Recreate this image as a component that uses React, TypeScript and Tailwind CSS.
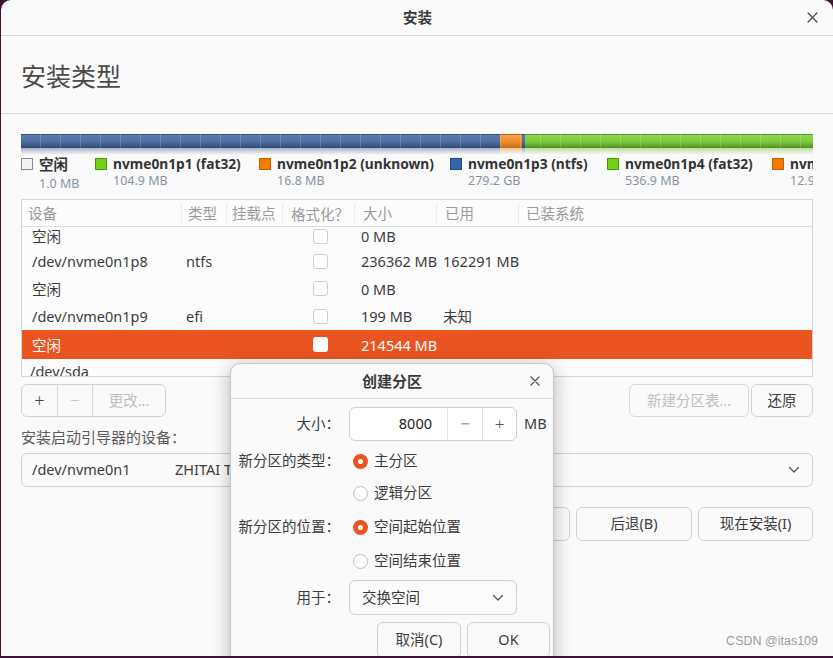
import React from "react";

const FONT = "font-['Noto_Sans','Noto_Sans_CJK_SC',sans-serif]";

function Chevron({ className = "" }: { className?: string }) {
  return (
    <svg width="12" height="8" viewBox="0 0 12 8" className={className} fill="none">
      <path d="M1.5 1.5 L6 6 L10.5 1.5" stroke="#555" strokeWidth="1.3" strokeLinecap="round" strokeLinejoin="round" />
    </svg>
  );
}

function CloseX({ size = 11 }: { size?: number }) {
  return (
    <svg width={size} height={size} viewBox="0 0 10 10" fill="none">
      <path d="M1 1 L9 9 M9 1 L1 9" stroke="#555" strokeWidth="1.3" strokeLinecap="round" />
    </svg>
  );
}

function Radio({ checked }: { checked: boolean }) {
  return checked ? (
    <div className="w-[15px] h-[15px] rounded-full bg-[#e95420] flex items-center justify-center shrink-0">
      <div className="w-[5px] h-[5px] rounded-full bg-white" />
    </div>
  ) : (
    <div className="w-[15px] h-[15px] rounded-full border border-[#bcbcbc] bg-white shrink-0" />
  );
}

function Check({ selected }: { selected?: boolean }) {
  return (
    <div
      className={
        selected
          ? "w-[15px] h-[15px] rounded-[3px] bg-white"
          : "w-[15px] h-[15px] rounded-[3px] border border-[#cfcfcf] bg-white"
      }
    />
  );
}

type Row = { dev: string; type: string; size: string; used: string; sel?: boolean; h: string };

const rows: Row[] = [
  { dev: "空闲", type: "", size: "0 MB", used: "", h: "h-[22px]" },
  { dev: "/dev/nvme0n1p8", type: "ntfs", size: "236362 MB", used: "162291 MB", h: "h-[28px]" },
  { dev: "空闲", type: "", size: "0 MB", used: "", h: "h-[27px]" },
  { dev: "/dev/nvme0n1p9", type: "efi", size: "199 MB", used: "未知", h: "h-[28px]" },
  { dev: "空闲", type: "", size: "214544 MB", used: "", sel: true, h: "h-[29px]" },
];

const cols = "grid grid-cols-[160px_45px_56px_72px_82px_82px_1fr]";

export default function App() {
  return (
    <div className={`w-[833px] h-[658px] bg-[#3d1433] overflow-hidden ${FONT}`}>
      <div className="ml-[1px] w-[832px] h-[656px] rounded-t-[10px] bg-[#fafafa] relative overflow-hidden flex flex-col">
        {/* title bar */}
        <div className="h-[36px] shrink-0 border-b border-[#d8d8d8] grid grid-cols-[1fr_auto_1fr] items-center">
          <div />
          <div className="text-[14.5px] font-semibold text-[#3a3a3a] pl-[1px]">安装</div>
          <div className="justify-self-end pr-[15px] flex items-center">
            <CloseX size={11} />
          </div>
        </div>
        {/* header */}
        <div className="h-[78px] shrink-0 border-b border-[#dadada] flex items-center pl-[20px] pt-[3px]">
          <div className="text-[25px] text-[#4a4a4a] leading-none">安装类型</div>
        </div>

        <div className="px-[20px] flex flex-col">
          {/* partition bar */}
          <div className="mt-[20px] relative">
            <div className="flex h-[14px]">
              <div className="w-[479px] bg-[linear-gradient(#34517c_0,#34517c_1px,#5a7bae_1px,#4c6ea2_55%,#2e4a72_100%)]" />
              <div className="w-[22px] bg-[linear-gradient(#b86010_0,#b86010_1px,#f6a04a_1px,#ef8a2c_55%,#c46a18_100%)]" />
              <div className="w-[3px] bg-[linear-gradient(#34517c_0,#34517c_1px,#5a7bae_1px,#4c6ea2_55%,#2e4a72_100%)]" />
              <div className="flex-1 bg-[linear-gradient(#5d9a2c_0,#5d9a2c_1px,#8bd64e_1px,#7ccb3f_55%,#4f8c1f_100%)]" />
            </div>
            <div className="absolute left-0 right-0 top-0 h-[14px] bg-[repeating-linear-gradient(90deg,transparent_0,transparent_19px,rgba(255,255,255,0.18)_19px,rgba(255,255,255,0.18)_20px)]" />
            <div className="flex h-[7px]">
              <div className="w-[479px] bg-[linear-gradient(rgba(60,90,135,0.45),rgba(60,90,135,0))]" />
              <div className="w-[22px] bg-[linear-gradient(rgba(230,130,40,0.45),rgba(230,130,40,0))]" />
              <div className="w-[3px] bg-[linear-gradient(rgba(60,90,135,0.45),rgba(60,90,135,0))]" />
              <div className="flex-1 bg-[linear-gradient(rgba(110,190,50,0.45),rgba(110,190,50,0))]" />
            </div>
          </div>

          {/* legend */}
          <div className="flex h-[37px] overflow-hidden">
            <div className="w-[74px] shrink-0 flex items-start">
              <div className="mt-[3px] w-[12px] h-[12px] border border-[#8a8a8a] bg-[#f2f2f2] shrink-0" />
              <div className="ml-[6px] flex flex-col">
                <div className="text-[14.5px] font-bold leading-[20px] text-[#333] mt-[-1px]">空闲</div>
                <div className="text-[12.5px] leading-[16px] text-[#8893a0] mt-[2px]">1.0 MB</div>
              </div>
            </div>
            {[
              { c: "bg-[#73d216] border-[#4e9a06]", n: "nvme0n1p1 (fat32)", s: "104.9 MB", w: "w-[164px]" },
              { c: "bg-[#f57900] border-[#ce5c00]", n: "nvme0n1p2 (unknown)", s: "16.8 MB", w: "w-[191px]" },
              { c: "bg-[#3465a4] border-[#204a87]", n: "nvme0n1p3 (ntfs)", s: "279.2 GB", w: "w-[157px]" },
              { c: "bg-[#73d216] border-[#4e9a06]", n: "nvme0n1p4 (fat32)", s: "536.9 MB", w: "w-[165px]" },
              { c: "bg-[#f57900] border-[#ce5c00]", n: "nvme0n1p5 (ntfs)", s: "12.9 GB", w: "w-[160px]" },
            ].map((l, i) => (
              <div key={i} className={`${l.w} shrink-0 flex items-start`}>
                <div className={`mt-[3px] w-[12px] h-[12px] border ${l.c} shrink-0`} />
                <div className="ml-[6px] flex flex-col whitespace-nowrap">
                  <div className="text-[13.75px] font-bold leading-[18px] text-[#333]">{l.n}</div>
                  <div className="text-[12.5px] leading-[16px] text-[#8893a0]">{l.s}</div>
                </div>
              </div>
            ))}
          </div>

          {/* table */}
          <div className="mt-[7px] h-[178px] border border-[#d5d5d5] bg-[#fcfcfc] flex flex-col overflow-hidden">
            <div className={`${cols} h-[27px] shrink-0 border-b border-[#dedede] text-[14.5px] text-[#9a9a9a] items-center`}>
              <div className="pl-[6px] h-[21px] border-r border-[#ececec] leading-[21px]">设备</div>
              <div className="pl-[6px] h-[21px] border-r border-[#ececec] leading-[21px]">类型</div>
              <div className="pl-[5px] h-[21px] border-r border-[#ececec] leading-[21px]">挂载点</div>
              <div className="pl-[8px] h-[21px] border-r border-[#ececec] leading-[21px]">
                格式化<span className="font-['Noto_Sans_CJK_SC',sans-serif]">？</span>
              </div>
              <div className="pl-[8px] h-[21px] border-r border-[#ececec] leading-[21px]">大小</div>
              <div className="pl-[8px] h-[21px] border-r border-[#ececec] leading-[21px]">已用</div>
              <div className="pl-[7px] h-[21px] leading-[21px]">已装系统</div>
            </div>
            <div className="h-[149px] overflow-hidden">
              <div className="-mt-[2px] flex flex-col">
                {rows.map((r, i) => (
                  <div
                    key={i}
                    className={`${cols} ${r.h} items-center text-[14.5px] leading-[20px] ${
                      r.sel ? "bg-[#e95420] text-white" : "text-[#3c3c3c]"
                    }`}
                  >
                    <div className="pl-[10px] whitespace-nowrap">{r.dev}</div>
                    <div className="pl-[4px]">{r.type}</div>
                    <div />
                    <div className="flex justify-center pl-[2px]">
                      <Check selected={r.sel} />
                    </div>
                    <div className="pl-[6px] whitespace-nowrap">{r.size}</div>
                    <div className="pl-[6px] whitespace-nowrap">{r.used}</div>
                    <div />
                  </div>
                ))}
                <div className="h-[26px] flex items-center pl-[8px] text-[14.5px] text-[#3c3c3c]">/dev/sda</div>
              </div>
            </div>
          </div>

          {/* buttons under table */}
          <div className="mt-[7px] flex items-center justify-between h-[33px]">
            <div className="flex h-[33px] border border-[#d3d3d3] rounded-[6px] bg-[#fafafa] text-[14.5px]">
              <div className="w-[35px] flex items-center justify-center text-[#444] text-[18px] font-light">+</div>
              <div className="w-[35px] border-l border-[#d8d8d8] flex items-center justify-center text-[#c0c0c0] text-[18px] font-light">−</div>
              <div className="w-[73px] border-l border-[#d8d8d8] flex items-center justify-center text-[#bdbdbd]">更改...</div>
            </div>
            <div className="flex gap-[2px]">
              <div className="w-[120px] h-[33px] border border-[#d8d8d8] rounded-[6px] flex items-center justify-center text-[14.5px] text-[#c0c0c0]">新建分区表...</div>
              <div className="w-[62px] h-[33px] border border-[#d3d3d3] rounded-[6px] flex items-center justify-center text-[14.5px] text-[#3c3c3c]">还原</div>
            </div>
          </div>

          <div className="mt-[10px] text-[15px] leading-[20px] text-[#5c5c5c]">安装启动引导器的设备：</div>

          <div className="mt-[6px] h-[34px] border border-[#d3d3d3] rounded-[6px] flex items-center text-[14.5px] text-[#3c3c3c]">
            <div className="pl-[10px] w-[153px]">/dev/nvme0n1</div>
            <div className="flex-1">ZHITAI TiPlus5000 1TB (1.0 TB)</div>
            <div className="pr-[12px]">
              <Chevron />
            </div>
          </div>

          <div className="mt-[20px] flex justify-end gap-[6px] text-[14.5px] text-[#3c3c3c]">
            <div className="w-[116px] h-[34px] border border-[#d3d3d3] rounded-[6px] flex items-center justify-center">退出(Q)</div>
            <div className="w-[116px] h-[34px] border border-[#d3d3d3] rounded-[6px] flex items-center justify-center">后退(B)</div>
            <div className="w-[115px] h-[34px] border border-[#d3d3d3] rounded-[6px] flex items-center justify-center">现在安装(I)</div>
          </div>
        </div>

        {/* dialog */}
        <div className="absolute left-[229px] top-[363px] w-[324px] h-[310px] rounded-t-[10px] border border-[#c4c4c4] bg-[#fafafa] shadow-[0_3px_18px_rgba(0,0,0,0.28)] flex flex-col">
          <div className="h-[35px] shrink-0 border-b border-[#d8d8d8] grid grid-cols-[1fr_auto_1fr] items-center">
            <div />
            <div className="text-[15px] font-bold text-[#3a3a3a]">创建分区</div>
            <div className="justify-self-end pr-[13px] flex items-center">
              <CloseX size={10} />
            </div>
          </div>

          <div className="flex flex-col text-[14.5px] text-[#3c3c3c]">
            {/* size */}
            <div className="mt-[8px] flex items-center h-[34px]">
              <div className="w-[109px] text-right">大小：</div>
              <div className="ml-[9px] w-[168px] h-[34px] border border-[#d0d0d0] rounded-[6px] bg-white flex">
                <div className="w-[97px] flex items-center justify-end pr-[15px] text-[#222]">8000</div>
                <div className="w-[35px] border-l border-[#e0e0e0] flex items-center justify-center text-[#555] text-[17px] font-light">−</div>
                <div className="w-[34px] border-l border-[#e0e0e0] flex items-center justify-center text-[#555] text-[17px] font-light">+</div>
              </div>
              <div className="ml-[7px]">MB</div>
            </div>
            {/* type */}
            <div className="mt-[5px] flex items-center h-[30px]">
              <div className="w-[109px] text-right whitespace-nowrap">新分区的类型：</div>
              <div className="ml-[13px] flex items-center gap-[6px]">
                <Radio checked />
                <span>主分区</span>
              </div>
            </div>
            <div className="mt-[2px] flex items-center h-[30px]">
              <div className="w-[109px]" />
              <div className="ml-[13px] flex items-center gap-[6px]">
                <Radio checked={false} />
                <span>逻辑分区</span>
              </div>
            </div>
            {/* position */}
            <div className="mt-[4px] flex items-center h-[30px]">
              <div className="w-[109px] text-right whitespace-nowrap">新分区的位置：</div>
              <div className="ml-[13px] flex items-center gap-[6px]">
                <Radio checked />
                <span>空间起始位置</span>
              </div>
            </div>
            <div className="mt-[4px] flex items-center h-[30px]">
              <div className="w-[109px]" />
              <div className="ml-[13px] flex items-center gap-[6px]">
                <Radio checked={false} />
                <span>空间结束位置</span>
              </div>
            </div>
            {/* use as */}
            <div className="mt-[4px] flex items-center h-[35px]">
              <div className="w-[109px] text-right">用于：</div>
              <div className="ml-[9px] w-[168px] h-[35px] border border-[#d0d0d0] rounded-[6px] bg-[#fbfbfb] flex items-center justify-between pl-[12px] pr-[12px]">
                <span>交换空间</span>
                <Chevron />
              </div>
            </div>
            {/* buttons */}
            <div className="mt-[7px] flex gap-[6px] pl-[146px]">
              <div className="w-[84px] h-[36px] border border-[#d0d0d0] rounded-[6px] flex items-center justify-center">取消(C)</div>
              <div className="w-[83px] h-[36px] border border-[#d0d0d0] rounded-[6px] flex items-center justify-center">OK</div>
            </div>
          </div>
        </div>

        <div className="absolute right-[15px] bottom-[5px] text-[12.5px] text-[#9d9d9d] font-['Liberation_Sans',sans-serif]">
          CSDN @itas109
        </div>
      </div>
    </div>
  );
}
